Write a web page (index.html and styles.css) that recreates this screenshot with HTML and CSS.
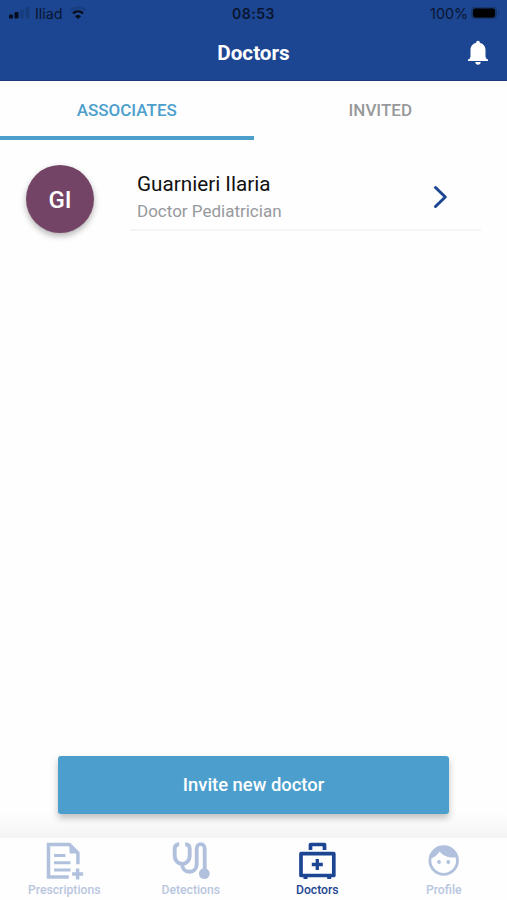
FILE: index.html
```html
<!DOCTYPE html>
<html lang="en">
<head>
    <meta charset="UTF-8">
    <meta name="viewport" content="width=device-width, initial-scale=1.0">
    <title>Doctors</title>
    <link rel="stylesheet" href="styles.css">
</head>
<body>
    <header class="header">
        <div class="status-bar">
            <div class="status-left">
                <svg class="signal" width="21" height="12" viewBox="0 0 21 12">
                    <rect x="0" y="7.5" width="4" height="4" rx="1" fill="#060d1c"/>
                    <rect x="5.5" y="5" width="4" height="6.5" rx="1" fill="#060d1c"/>
                    <rect x="11" y="2.5" width="4" height="9" rx="1" fill="#183d7e"/>
                    <rect x="16.5" y="0" width="4" height="11.5" rx="1" fill="#183d7e"/>
                </svg>
                <span class="carrier">Iliad</span>
                <svg class="wifi" width="18" height="14" viewBox="0 0 18 14" fill="none" stroke-width="2.2">
                    <path d="M1.5 4.5C5.8.6 12.2.6 16.5 4.5" stroke="#183d7e"/>
                    <path d="M4 7.4c2.9-2.6 7.1-2.6 10 0" stroke="#060d1c"/>
                    <path d="M9 13L6 10.2c1.7-1.5 4.3-1.5 6 0z" fill="#060d1c"/>
                </svg>
            </div>
            <span class="time">08:53</span>
            <div class="status-right">
                <span class="percent">100%</span>
                <svg width="30" height="14" viewBox="0 0 30 14">
                    <rect x="1" y="1" width="26" height="12" rx="4" fill="#17376f"/>
                    <rect x="3" y="2.5" width="22" height="9" rx="2.5" fill="#000"/>
                    <path d="M28 4.5q2 2.5 0 5z" fill="#17376f"/>
                </svg>
            </div>
        </div>
        <div class="title-bar">
            <h1 class="title">Doctors</h1>
            <svg class="bell" width="22" height="26" viewBox="0 0 22 26" fill="#fff">
                <path d="M11 .8c1.1 0 1.8.7 1.8 1.7v.3c3.6.9 5.7 3.7 5.7 7.2v6.7l1.200 2.5h1.3V21H1v-1.8h1.3l1.2-2.5V10c0-3.5 2.1-6.300 5.7-7.200v-.3c0-1 .7-1.700 1.8-1.700zM8.300 22h5.400c0 1.700-1.100 2.700-2.700 2.700S8.300 23.700 8.300 22z"/>
            </svg>
        </div>
    </header>

    <nav class="tabs">
        <div class="tab tab-active">ASSOCIATES</div>
        <div class="tab">INVITED</div>
    </nav>

    <main class="content">
        <div class="doctor">
            <div class="avatar">GI</div>
            <div class="doctor-row">
                <div class="doctor-info">
                    <div class="doctor-name">Guarnieri Ilaria</div>
                    <div class="doctor-role">Doctor Pediatrician</div>
                </div>
                <svg class="chevron" width="16" height="24" viewBox="0 0 16 24" fill="none" stroke="#1c4592" stroke-width="3" stroke-linecap="round" stroke-linejoin="round">
                    <path d="M3.500 2.500l9.800 9.500-9.800 9.500"/>
                </svg>
            </div>
        </div>
        <button class="invite">Invite new doctor</button>
    </main>

    <footer class="bottom-nav">
        <div class="nav-item">
            <svg width="40" height="40" viewBox="0 0 40 40" fill="none" stroke="#b1c1dd" stroke-width="3.500">
                <path d="M24.800 37H4.500V4.500h21l8.400 8.400v11.300"/>
                <path d="M26 4v9h9z" fill="#b1c1dd" stroke-width="1"/>
                <path d="M10 15.500h11.500M10 22.700h16.500M10 30h16.500" stroke-width="3"/>
                <path d="M33.600 28.500v11M28.100 34h11" stroke-width="3.500"/>
            </svg>
            <span>Prescriptions</span>
        </div>
        <div class="nav-item">
            <svg width="40" height="40" viewBox="0 0 40 40" fill="none" stroke="#b1c1dd" stroke-width="3.900">
                <path d="M8.200 4.300C5 4.300 3.700 6 3.700 9v7c0 4.500 3.300 8 7.500 8s7.500-3.500 7.500-8V9c0-3-1.300-4.700-4.500-4.700"/>
                <path d="M11.200 24c0 4.500 3 7.800 7.200 7.800s7.300-3.300 7.300-7.800V9c0-3 1.600-4.900 4-4.900s4 1.900 4 4.900v22"/>
                <circle cx="33.300" cy="33.600" r="5.400" fill="#b1c1dd" stroke="none"/>
            </svg>
            <span>Detections</span>
        </div>
        <div class="nav-item nav-active">
            <svg width="40" height="40" viewBox="0 0 40 40" fill="none" stroke="#1c4592" stroke-width="3.700" stroke-linejoin="round">
                <path d="M13.500 10V4.500h14V10"/>
                <rect x="4" y="13.700" width="32.800" height="21.800"/>
                <path d="M20.300 19v11M14.800 24.500h11" stroke-width="3.300"/>
                <path d="M6.500 37.700h4M30.200 37.700h4" stroke-width="2.500"/>
            </svg>
            <span>Doctors</span>
        </div>
        <div class="nav-item">
            <svg width="40" height="40" viewBox="0 0 40 40">
                <circle cx="19.700" cy="20.500" r="13.800" fill="none" stroke="#b1c1dd" stroke-width="2.800"/>
                <path d="M5.200 19C9.200 18 13.200 15.500 15.700 11.500c4 5 9.500 6.800 18 5.800C32.200 10 26.700 6 19.700 6S6.200 11.500 5.200 19z" fill="#b1c1dd"/>
                <circle cx="15" cy="22" r="1.900" fill="#b1c1dd"/>
                <circle cx="24.300" cy="22" r="1.900" fill="#b1c1dd"/>
            </svg>
            <span>Profile</span>
        </div>
    </footer>
</body>
</html>
```
FILE: styles.css
```css
* {
    box-sizing: border-box;
}
body {
    margin: 0;
    height: 900px;
    display: flex;
    flex-direction: column;
    overflow: hidden;
    background: #fefefe;
    font-family: Roboto, sans-serif;
}
.header {
    height: 81px;
    background: #1c4592;
    border-bottom: 1px solid #19397c;
}
.status-bar {
    height: 26px;
    padding: 0 7px 0 9px;
    display: grid;
    grid-template-columns: 1fr auto 1fr;
    align-items: center;
    font-family: Inter, sans-serif;
    font-size: 14px;
    color: #0a1630;
}
.status-left {
    display: flex;
    align-items: center;
}
.carrier {
    margin: 0 6px 0 5px;
    font-size: 14.3px;
}
.time {
    padding-right: 2px;
    font-weight: 600;
    letter-spacing: 0.5px;
}
.status-right {
    display: flex;
    align-items: center;
    justify-content: flex-end;
    gap: 2px;
}
.percent {
    font-size: 14.3px;
}
.title-bar {
    height: 54px;
    padding: 0 18px 0 40px;
    display: flex;
    align-items: center;
}
.title {
    flex: 1;
    margin: 0;
    text-align: center;
    font-size: 20.7px;
    font-weight: 700;
    color: #fff;
}
.tabs {
    height: 59px;
    display: flex;
}
.tab {
    flex: 1;
    line-height: 58px;
    text-align: center;
    font-size: 17px;
    font-weight: 500;
    color: #97999b;
}
.tab-active {
    color: #4c9fcd;
    border-bottom: 4px solid #4c9fcd;
}
.content {
    flex: 1;
    display: flex;
    flex-direction: column;
    justify-content: space-between;
    padding: 20px 26px 24px;
    background: linear-gradient(to top, #f4f4f4, #fefefe 26px);
}
.doctor {
    display: flex;
    gap: 36px;
}
.avatar {
    width: 68px;
    height: 68px;
    margin-top: 5px;
    border-radius: 50%;
    background: #744466;
    box-shadow: 0 3px 6px rgba(0, 0, 0, 0.3);
    color: #fff;
    font-size: 24px;
    font-weight: 500;
    line-height: 70px;
    text-align: center;
}
.doctor-row {
    flex: 1;
    height: 71px;
    display: flex;
    justify-content: space-between;
    padding: 12px 33px 0 7px;
    border-bottom: 2px solid #f5f5f5;
}
.doctor-name {
    font-size: 20.7px;
    line-height: 25px;
    color: #111;
}
.doctor-role {
    margin-top: 2px;
    font-size: 17px;
    line-height: 25px;
    color: #97999d;
}
.chevron {
    margin-top: 13px;
}
.invite {
    height: 58px;
    margin: 0 32px;
    padding-bottom: 3px;
    border: none;
    border-radius: 3px;
    background: #4c9fcd;
    box-shadow: 0 4px 7px rgba(0, 0, 0, 0.25);
    color: #fff;
    font-family: Roboto, sans-serif;
    font-size: 18.4px;
    font-weight: 500;
}
.bottom-nav {
    height: 62px;
    display: grid;
    grid-template-columns: repeat(4, 1fr);
    padding: 2px 0 0 1px;
    background: #fefefe;
}
.nav-item {
    display: flex;
    flex-direction: column;
    align-items: center;
    gap: 2px;
    font-size: 12.2px;
    font-weight: 500;
    line-height: 16px;
    color: #b9c6df;
}
.nav-active {
    color: #1c4592;
}
```
